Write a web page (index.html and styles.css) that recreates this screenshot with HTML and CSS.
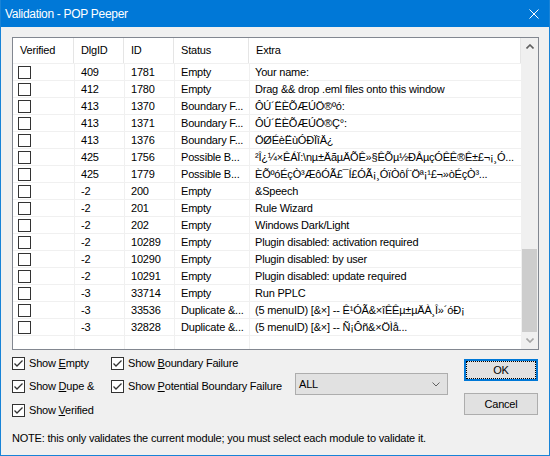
FILE: index.html
```html
<!DOCTYPE html>
<html>
<head>
<meta charset="utf-8">
<link rel="stylesheet" href="styles.css">
</head>
<body>
<div class="window">
  <div class="titlebar">
    <span class="title">Validation - POP Peeper</span>
    <svg class="close" width="10" height="10" viewBox="0 0 10 10"><path d="M0.5 0.5 L9.5 9.5 M9.5 0.5 L0.5 9.5" stroke="#fff" stroke-width="1" fill="none"/></svg>
  </div>
  <div class="content">
    <div class="listview">
      <div class="lv-main">
        <div class="lv-header">
          <div class="hcell c1">Verified</div>
          <div class="hcell c2">DlgID</div>
          <div class="hcell c3">ID</div>
          <div class="hcell c4">Status</div>
          <div class="hcell c5">Extra</div>
        </div>
        <div class="lv-body">
          <div class="row"><div class="cell c1 cbcell"><span class="box"></span></div><div class="cell c2">409</div><div class="cell c3">1781</div><div class="cell c4">Empty</div><div class="cell c5">Your name:</div></div>
          <div class="row"><div class="cell c1 cbcell"><span class="box"></span></div><div class="cell c2">412</div><div class="cell c3">1780</div><div class="cell c4">Empty</div><div class="cell c5">Drag &amp;&amp; drop .eml files onto this window</div></div>
          <div class="row"><div class="cell c1 cbcell"><span class="box"></span></div><div class="cell c2">413</div><div class="cell c3">1370</div><div class="cell c4">Boundary F...</div><div class="cell c5">ÔÚ´ËÈÕÆÚÖ®ºó:</div></div>
          <div class="row"><div class="cell c1 cbcell"><span class="box"></span></div><div class="cell c2">413</div><div class="cell c3">1371</div><div class="cell c4">Boundary F...</div><div class="cell c5">ÔÚ´ËÈÕÆÚÖ®Ç°:</div></div>
          <div class="row"><div class="cell c1 cbcell"><span class="box"></span></div><div class="cell c2">413</div><div class="cell c3">1376</div><div class="cell c4">Boundary F...</div><div class="cell c5">ÖØÉèËùÓÐÏîÄ¿</div></div>
          <div class="row"><div class="cell c1 cbcell"><span class="box"></span></div><div class="cell c2">425</div><div class="cell c3">1756</div><div class="cell c4">Possible B...</div><div class="cell c5">²Î¿¼×ÊÁÏ:\nµ±ÄãµÄÕÊ»§ÊÕµ½ÐÂµçÓÊÊ®Ê±£¬¡¸Ó...</div></div>
          <div class="row"><div class="cell c1 cbcell"><span class="box"></span></div><div class="cell c2">425</div><div class="cell c3">1779</div><div class="cell c4">Possible B...</div><div class="cell c5">ÈÕºóÉçÒ³ÆôÓÃ£¯Í£ÓÃ¡¸ÓïÒôÍ¨Öª¡¹£¬»òÉçÒ³...</div></div>
          <div class="row"><div class="cell c1 cbcell"><span class="box"></span></div><div class="cell c2">-2</div><div class="cell c3">200</div><div class="cell c4">Empty</div><div class="cell c5">&amp;Speech</div></div>
          <div class="row"><div class="cell c1 cbcell"><span class="box"></span></div><div class="cell c2">-2</div><div class="cell c3">201</div><div class="cell c4">Empty</div><div class="cell c5">Rule Wizard</div></div>
          <div class="row"><div class="cell c1 cbcell"><span class="box"></span></div><div class="cell c2">-2</div><div class="cell c3">202</div><div class="cell c4">Empty</div><div class="cell c5">Windows Dark/Light</div></div>
          <div class="row"><div class="cell c1 cbcell"><span class="box"></span></div><div class="cell c2">-2</div><div class="cell c3">10289</div><div class="cell c4">Empty</div><div class="cell c5">Plugin disabled: activation required</div></div>
          <div class="row"><div class="cell c1 cbcell"><span class="box"></span></div><div class="cell c2">-2</div><div class="cell c3">10290</div><div class="cell c4">Empty</div><div class="cell c5">Plugin disabled: by user</div></div>
          <div class="row"><div class="cell c1 cbcell"><span class="box"></span></div><div class="cell c2">-2</div><div class="cell c3">10291</div><div class="cell c4">Empty</div><div class="cell c5">Plugin disabled: update required</div></div>
          <div class="row"><div class="cell c1 cbcell"><span class="box"></span></div><div class="cell c2">-3</div><div class="cell c3">33714</div><div class="cell c4">Empty</div><div class="cell c5">Run PPLC</div></div>
          <div class="row"><div class="cell c1 cbcell"><span class="box"></span></div><div class="cell c2">-3</div><div class="cell c3">33536</div><div class="cell c4">Duplicate &amp;...</div><div class="cell c5">(5 menuID) [&amp;×] -- Ê¹ÓÃ&amp;×îÊÊµ±µÄÀ¸Î»´óÐ¡</div></div>
          <div class="row last"><div class="cell c1 cbcell"><span class="box"></span></div><div class="cell c2">-3</div><div class="cell c3">32828</div><div class="cell c4">Duplicate &amp;...</div><div class="cell c5">(5 menuID) [&amp;×] -- Ñ¡Ôñ&amp;×ÖÌå...</div></div>
        </div>
      </div>
      <div class="vscroll">
        <div class="sb-btn"><svg width="8" height="5" viewBox="0 0 8 5"><path d="M0.5 4.5 L4 1 L7.5 4.5" stroke="#606060" stroke-width="1.6" fill="none"/></svg></div>
        <div class="sb-track"><div class="sb-thumb"></div></div>
        <div class="sb-btn"><svg width="8" height="5" viewBox="0 0 8 5"><path d="M0.5 0.5 L4 4 L7.5 0.5" stroke="#a6a6a6" stroke-width="1.6" fill="none"/></svg></div>
      </div>
    </div>

    <div class="controls">
      <label class="chk r1 k1"><span class="box checked"><svg width="13" height="13" viewBox="0 0 13 13"><path d="M2.5 6.5 L5 9 L10.5 3.5" stroke="#333" stroke-width="1.3" fill="none"/></svg></span><span>Show <u>E</u>mpty</span></label>
      <label class="chk r1 k2"><span class="box checked"><svg width="13" height="13" viewBox="0 0 13 13"><path d="M2.5 6.5 L5 9 L10.5 3.5" stroke="#333" stroke-width="1.3" fill="none"/></svg></span><span>Show <u>B</u>oundary Failure</span></label>
      <label class="chk r2 k1"><span class="box checked"><svg width="13" height="13" viewBox="0 0 13 13"><path d="M2.5 6.5 L5 9 L10.5 3.5" stroke="#333" stroke-width="1.3" fill="none"/></svg></span><span>Show <u>D</u>upe &amp;</span></label>
      <label class="chk r2 k2"><span class="box checked"><svg width="13" height="13" viewBox="0 0 13 13"><path d="M2.5 6.5 L5 9 L10.5 3.5" stroke="#333" stroke-width="1.3" fill="none"/></svg></span><span>Show <u>P</u>otential Boundary Failure</span></label>
      <label class="chk r3 k1"><span class="box checked"><svg width="13" height="13" viewBox="0 0 13 13"><path d="M2.5 6.5 L5 9 L10.5 3.5" stroke="#333" stroke-width="1.3" fill="none"/></svg></span><span>Show <u>V</u>erified</span></label>
      <div class="combo"><span>ALL</span><svg width="8" height="5" viewBox="0 0 8 5"><path d="M0.5 0.5 L4 4 L7.5 0.5" stroke="#606060" stroke-width="1" fill="none"/></svg></div>
      <div class="buttons">
        <div class="btn default"><span>OK</span></div>
        <div class="btn">Cancel</div>
      </div>
    </div>

    <div class="note">NOTE: this only validates the current module; you must select each module to validate it.</div>
  </div>
</div>
</body>
</html>
```

FILE: styles.css
```css
html, body {
  margin: 0;
  padding: 0;
  background: #ffffff;
}

body {
  font-family: "Liberation Sans", Arial, sans-serif;
  font-size: 11px;
  letter-spacing: -0.2px;
  color: #000;
}

.window {
  width: 550px;
  height: 456px;
  box-sizing: border-box;
  border: 1px solid #1883d7;
  border-top: none;
  background: #f0f0f0;
  display: flex;
  flex-direction: column;
}

.titlebar {
  height: 27px;
  flex: none;
  background: #0078d7;
  display: flex;
  align-items: center;
  justify-content: space-between;
  padding: 0 10px 0 4px;
}

.title {
  color: #fff;
  font-size: 12px;
  letter-spacing: -0.3px;
}

.content {
  flex: 1;
  display: flex;
  flex-direction: column;
  padding: 10px 10px 0 11px;
}

/* list view */
.listview {
  height: 313px;
  box-sizing: border-box;
  border: 1px solid #828790;
  background: #fff;
  display: flex;
}

.lv-main {
  width: 508px;
  flex: none;
  display: flex;
  flex-direction: column;
}

.lv-header {
  height: 25px;
  display: flex;
  flex: none;
}

.hcell {
  box-sizing: border-box;
  border-right: 1px solid #e5e5e5;
  padding-left: 7px;
  line-height: 25px;
  white-space: nowrap;
  overflow: hidden;
}

.c1 { width: 61px; flex: none; }
.c2 { width: 50px; flex: none; }
.c3 { width: 50px; flex: none; }
.c4 { width: 75px; flex: none; }
.c5 { width: 272px; flex: none; }

.lv-body {
  flex: 1;
  background-image:
    linear-gradient(#f0f0f0, #f0f0f0),
    linear-gradient(#f0f0f0, #f0f0f0),
    linear-gradient(#f0f0f0, #f0f0f0),
    linear-gradient(#f0f0f0, #f0f0f0);
  background-size: 1px 100%;
  background-repeat: no-repeat;
  background-position: 61px 0, 111px 0, 161px 0, 236px 0;
}

.row {
  display: flex;
  height: 17px;
  box-sizing: border-box;
  border-top: 1px solid #f0f0f0;
}

.row.last {
  height: 18px;
  border-bottom: 1px solid #f0f0f0;
}

.cell {
  box-sizing: border-box;
  padding-left: 7px;
  line-height: 16px;
  white-space: nowrap;
  overflow: hidden;
  text-overflow: ellipsis;
}

.c5.cell {
  padding-left: 6px;
  padding-right: 2px;
}

.cbcell {
  padding-left: 5px;
  display: flex;
  align-items: center;
}

.box {
  width: 13px;
  height: 13px;
  box-sizing: border-box;
  border: 1px solid #333;
  background: #fff;
  flex: none;
  display: block;
}

.box.checked {
  border: none;
  background: #fff;
  box-shadow: inset 0 0 0 1px #333;
}

.box.checked svg {
  display: block;
}

/* scrollbar */
.vscroll {
  width: 17px;
  flex: none;
  background: #f0f0f0;
  display: flex;
  flex-direction: column;
}

.sb-btn {
  height: 17px;
  flex: none;
  display: flex;
  align-items: center;
  justify-content: center;
}

.sb-btn svg {
  display: block;
}

.sb-track {
  flex: 1;
  display: flex;
  flex-direction: column;
  justify-content: flex-end;
}

.sb-thumb {
  height: 83px;
  margin: 0 1px;
  background: #cdcdcd;
}

/* bottom controls */
.controls {
  margin-top: 7px;
  display: grid;
  grid-template-columns: 99px 184px 169px 74px;
  grid-template-rows: 23px 24px 24px;
}

.chk {
  display: flex;
  align-items: center;
  gap: 4px;
  height: 13px;
  line-height: 13px;
  white-space: nowrap;
}

.r1 { grid-row: 1; }
.r2 { grid-row: 2; }
.r3 { grid-row: 3; }
.k1 { grid-column: 1; }
.k2 { grid-column: 2; }

.combo {
  grid-row: 2;
  grid-column: 3;
  width: 153px;
  height: 22px;
  margin-top: -7px;
  box-sizing: border-box;
  border: 1px solid #adadad;
  background: #e1e1e1;
  display: flex;
  align-items: center;
  justify-content: space-between;
  padding: 0 7px 0 3px;
}

.combo svg {
  display: block;
}

.buttons {
  grid-row: 1 / 4;
  grid-column: 4;
  display: flex;
  flex-direction: column;
  gap: 12px;
  padding-top: 2px;
}

.btn {
  height: 22px;
  box-sizing: border-box;
  border: 1px solid #adadad;
  background: #e1e1e1;
  display: flex;
  align-items: center;
  justify-content: center;
  position: relative;
}

.btn.default {
  border: 2px solid #0078d7;
}

.btn.default::after {
  content: "";
  position: absolute;
  inset: 0;
  border: 1px dotted #000;
}

.note {
  margin-top: 3px;
  line-height: 14px;
  white-space: nowrap;
}
```
